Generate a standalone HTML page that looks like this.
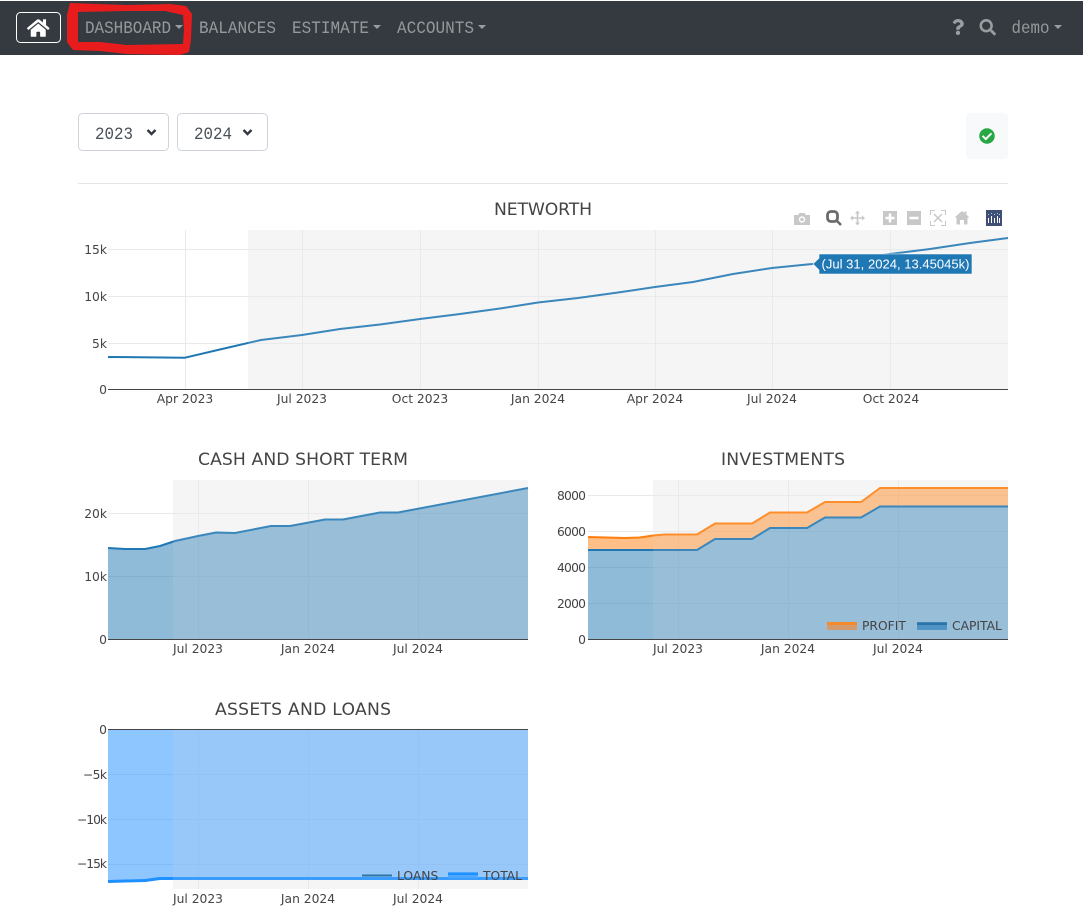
<!DOCTYPE html>
<html lang="en">
<head>
<meta charset="utf-8">
<title>Dashboard</title>
<style>
html,body{margin:0;padding:0;background:#fff;width:1083px;height:907px;overflow:hidden}
svg{display:block;position:absolute;left:0;top:0}
.nav{font-family:"Liberation Mono",monospace;font-size:17.5px;fill:#96999c}
.sel{font-family:"Liberation Mono",monospace;font-size:17.5px;fill:#495057}
.t{font-family:"DejaVu Sans",sans-serif;font-size:12.3px;fill:#444}
.e{text-anchor:end}
.m{text-anchor:middle}
.title{font-family:"DejaVu Sans",sans-serif;font-size:17.2px;fill:#444;text-anchor:middle}
.g{stroke:#e9e9e9;stroke-width:1;fill:none}
.l{fill:none;stroke-width:2;stroke-linejoin:round}
</style>
</head>
<body>
<svg width="1083" height="907" viewBox="0 0 1083 907" xmlns="http://www.w3.org/2000/svg">
<!-- Navbar -->
<rect x="0" y="1" width="1083" height="54" fill="#343a40"/>
<rect x="16.5" y="12.5" width="44" height="30" rx="4" fill="none" stroke="#fff"/>
<svg x="27" y="18" width="22.5" height="20" viewBox="0 0 576 512"><path fill="#fff" d="M280.37 148.26L96 300.11V464a16 16 0 0 0 16 16l112.06-.29a16 16 0 0 0 15.92-16V368a16 16 0 0 1 16-16h64a16 16 0 0 1 16 16v95.64a16 16 0 0 0 16 16.05L464 480a16 16 0 0 0 16-16V300L295.67 148.26a12.19 12.19 0 0 0-15.3 0zM571.6 251.47L488 182.56V44.05a12 12 0 0 0-12-12h-56a12 12 0 0 0-12 12v72.61L318.47 43a48 48 0 0 0-61 0L4.34 251.47a12 12 0 0 0-1.6 16.9l25.5 31A12 12 0 0 0 45.15 301l235.22-193.74a12.19 12.19 0 0 1 15.3 0L530.9 301a12 12 0 0 0 16.9-1.6l25.5-31a12 12 0 0 0-1.7-16.93z"/></svg>
<text class="nav" x="85" y="33" textLength="86" lengthAdjust="spacingAndGlyphs">DASHBOARD</text>
<path d="M175 25h8l-4 4z" fill="#9a9da0"/>
<text class="nav" x="199" y="33" textLength="77" lengthAdjust="spacingAndGlyphs">BALANCES</text>
<text class="nav" x="292" y="33" textLength="77" lengthAdjust="spacingAndGlyphs">ESTIMATE</text>
<path d="M373 25h8l-4 4z" fill="#9a9da0"/>
<text class="nav" x="397" y="33" textLength="77" lengthAdjust="spacingAndGlyphs">ACCOUNTS</text>
<path d="M478 25h8l-4 4z" fill="#9a9da0"/>
<svg x="952" y="19" width="12" height="16" viewBox="0 0 384 512"><path fill="#9a9da0" d="M202.021 0C122.202 0 70.503 32.703 29.914 91.026c-7.363 10.58-5.093 25.086 5.178 32.874l43.138 32.709c10.373 7.865 25.132 6.026 33.253-4.148 25.049-31.381 43.63-49.449 82.757-49.449 30.764 0 68.816 19.799 68.816 49.631 0 22.552-18.617 34.134-48.993 51.164-35.423 19.86-82.299 44.576-82.299 106.405V320c0 13.255 10.745 24 24 24h72.471c13.255 0 24-10.745 24-24v-5.773c0-42.86 125.268-44.645 125.268-160.627C377.504 66.256 286.902 0 202.021 0zM192 373.459c-38.196 0-69.271 31.075-69.271 69.271 0 38.195 31.075 69.27 69.271 69.27s69.271-31.075 69.271-69.271-31.075-69.27-69.271-69.27z"/></svg>
<svg x="979.5" y="19" width="16.5" height="16.5" viewBox="0 0 512 512"><path fill="#9a9da0" d="M505 442.7L405.3 343c-4.5-4.5-10.6-7-17-7H372c27.6-35.3 44-79.7 44-128C416 93.1 322.9 0 208 0S0 93.1 0 208s93.1 208 208 208c48.3 0 92.7-16.4 128-44v16.3c0 6.4 2.5 12.5 7 17l99.7 99.7c9.4 9.4 24.6 9.4 33.9 0l28.3-28.3c9.4-9.4 9.4-24.6.1-34zM208 336c-70.7 0-128-57.2-128-128 0-70.7 57.2-128 128-128 70.7 0 128 57.2 128 128 0 70.7-57.2 128-128 128z"/></svg>
<text class="nav" x="1011.500" y="33" textLength="38" lengthAdjust="spacingAndGlyphs">demo</text>
<path d="M1054 25h8l-4 4z" fill="#9a9da0"/>

<!-- Red scribble -->
<path fill-rule="evenodd" fill="#e81c1c" d="M70 3L127 5L170 4L186 6L192 14L191 40L189 52L180 55L127 54L100 51L73 50L67 42L67 15ZM78 12L127 11L165 11L183 15L184 30L183 44L127 45L100 42L78 42Z"/>

<!-- Year selects -->
<rect x="78.500" y="113.500" width="90" height="37" rx="4" fill="#fff" stroke="#ced4da"/>
<text class="sel" x="95" y="139" textLength="38" lengthAdjust="spacingAndGlyphs">2023</text>
<path d="M147.500 130l4 4 4-4" fill="none" stroke="#343a40" stroke-width="2.400"/>
<rect x="177.500" y="113.500" width="90" height="37" rx="4" fill="#fff" stroke="#ced4da"/>
<text class="sel" x="194" y="139" textLength="38" lengthAdjust="spacingAndGlyphs">2024</text>
<path d="M243.500 130l4 4 4-4" fill="none" stroke="#343a40" stroke-width="2.400"/>

<!-- Status -->
<rect x="966" y="113" width="42" height="46" rx="4" fill="#f8f9fa"/>
<svg x="979" y="128" width="16" height="16" viewBox="0 0 512 512"><path fill="#28a745" d="M504 256c0 136.967-111.033 248-248 248S8 392.967 8 256 119.033 8 256 8s248 111.033 248 248zM227.314 387.314l184-184c6.248-6.248 6.248-16.379 0-22.627l-22.627-22.627c-6.248-6.249-16.379-6.249-22.628 0L216 308.118l-70.059-70.059c-6.248-6.248-16.379-6.248-22.628 0l-22.627 22.627c-6.248 6.248-6.248 16.379 0 22.627l104 104c6.249 6.25 16.379 6.25 22.628.001z"/></svg>
<rect x="78" y="183" width="930" height="1" fill="#e5e5e5"/>

<!-- NETWORTH -->
<text class="title" x="543" y="215" textLength="98">NETWORTH</text>
<rect x="248" y="230" width="760" height="159" fill="#f5f5f5"/>
<path class="g" d="M108 249.500H1008M108 296.500H1008M108 343.500H1008M185.500 230V389M302.500 230V389M420.500 230V389M538.500 230V389M655.500 230V389M772.500 230V389M890.500 230V389"/>
<polyline class="l" stroke="#1f77b4" points="108,357 185,357.700 222,349 261,340 302,335 340,329 380,324.500 420,319 460,314 500,308.500 538,302.500 578,298 618,292.500 655,287 693,282 733,274 772,268 812,264 850,259 890,254 930,249 970,243 1008,238"/>
<rect x="248" y="230" width="760" height="159" fill="#f5f5f5" opacity=".13"/>
<rect x="108" y="389" width="900" height="1" fill="#444"/>
<text class="t e" x="107" y="254">15k</text>
<text class="t e" x="107" y="301">10k</text>
<text class="t e" x="107" y="348">5k</text>
<text class="t e" x="107" y="394">0</text>
<text class="t m" x="185" y="403">Apr 2023</text>
<text class="t m" x="302" y="403">Jul 2023</text>
<text class="t m" x="420" y="403">Oct 2023</text>
<text class="t m" x="538" y="403">Jan 2024</text>
<text class="t m" x="655" y="403">Apr 2024</text>
<text class="t m" x="772" y="403">Jul 2024</text>
<text class="t m" x="891" y="403">Oct 2024</text>
<!-- Tooltip -->
<path d="M813 264L819 258V254H972V274H819V270Z" fill="#1f77b4" stroke="#fff" stroke-width=".6"/>
<text x="821.500" y="268.500" font-family="'Liberation Sans',sans-serif" font-size="13" fill="#fff" textLength="148">(Jul 31, 2024, 13.45045k)</text>
<!-- Modebar -->
<g fill="#c8c8c8">
<path d="M794 215h4l1.500-2h5l1.500 2h4v10h-16z"/>
<circle cx="802" cy="219.500" r="3.200" fill="#fff"/>
<circle cx="802" cy="219.500" r="1.800"/>
<path d="M857.500 210.500l2.500 3h-1.700v3.700h3.700v-1.700l3 2.500-3 2.500v-1.700h-3.700v3.700h1.700l-2.500 3-2.500-3h1.700v-3.700h-3.700v1.700l-3-2.500 3-2.500v1.700h3.700v-3.700h-1.700z"/>
<rect x="883" y="211" width="14" height="14"/>
<rect x="907" y="211" width="14" height="14"/>
<path d="M962 211l2.500 2v-1.500h2v3.200l3 2.800h-2v7h-3.500v-4.500h-4v4.500h-3.500v-7h-2z"/>
</g>
<path d="M890 213.500v9M885.500 218h9M909.500 218h9" stroke="#fff" stroke-width="2.500" fill="none"/>
<path d="M930.500 215v-4.500h4.500M941 210.500h4.500v4.500M945.500 221v4.500h-4.500M935 225.500h-4.500v-4.500" fill="none" stroke="#c8c8c8"/>
<path d="M934 214l8 8M942 214l-8 8" stroke="#c8c8c8" stroke-width="1.500"/>
<rect x="827.500" y="211.500" width="10" height="10" rx="3.500" fill="#fff" stroke="#6b6b6b" stroke-width="2.800"/>
<path d="M836.500 220.500l4.500 4.500" stroke="#6b6b6b" stroke-width="2.600"/>
<rect x="986" y="210" width="16" height="16" fill="#3f4f75"/>
<path d="M988.500 218v5M991.500 216v7M994.500 218v5M997.500 216v7M999.500 218v5" stroke="#fff" stroke-width="1"/>
<path d="M988.500 214v1M991.500 213v1M994.500 214v1M997.500 213v1M999.500 214v1" stroke="#9fd8d6" stroke-width="1"/>

<!-- CASH AND SHORT TERM -->
<text class="title" x="303" y="465" textLength="210">CASH AND SHORT TERM</text>
<rect x="173" y="480" width="355" height="159" fill="#f5f5f5"/>
<path class="g" d="M108 513.500H528M108 576.500H528M198.500 480V639M308.500 480V639M418.500 480V639"/>
<polygon fill="#1f77b4" fill-opacity=".5" points="108,548 125,549 145,549 160,546 175,541 198,536 216,532.500 235,533 271,526 290,526 325,519.500 343,519.500 380,512.500 398,512.500 528,488 528,639 108,639"/>
<polyline class="l" stroke="#1f77b4" points="108,548 125,549 145,549 160,546 175,541 198,536 216,532.500 235,533 271,526 290,526 325,519.500 343,519.500 380,512.500 398,512.500 528,488"/>
<rect x="173" y="480" width="355" height="159" fill="#f5f5f5" opacity=".13"/>
<rect x="108" y="639" width="420" height="1" fill="#444"/>
<text class="t e" x="107" y="518">20k</text>
<text class="t e" x="107" y="581">10k</text>
<text class="t e" x="107" y="644">0</text>
<text class="t m" x="198" y="653">Jul 2023</text>
<text class="t m" x="308" y="653">Jan 2024</text>
<text class="t m" x="418" y="653">Jul 2024</text>

<!-- INVESTMENTS -->
<text class="title" x="783" y="465" textLength="124">INVESTMENTS</text>
<rect x="653" y="480" width="355" height="159" fill="#f5f5f5"/>
<path class="g" d="M588 495.500H1008M588 531.500H1008M588 567.500H1008M588 603.500H1008M678.500 480V639M788.500 480V639M898.500 480V639"/>
<polygon fill="#1f77b4" fill-opacity=".5" points="588,550 697,550 715,539 752,539 770,528 807,528 825,517.500 861,517.500 880,506.500 1008,506.500 1008,639 588,639"/>
<polygon fill="#ff7f0e" fill-opacity=".5" points="588,537 625,538 640,537.500 653,535.500 665,534.500 697,534.500 715,523.500 752,523.500 770,512.500 807,512.500 825,502 861,502 880,488 1008,488 1008,506.500 880,506.500 861,517.500 825,517.500 807,528 770,528 752,539 715,539 697,550 588,550"/>
<polyline class="l" stroke="#1f77b4" points="588,550 697,550 715,539 752,539 770,528 807,528 825,517.500 861,517.500 880,506.500 1008,506.500"/>
<polyline class="l" stroke="#ff7f0e" points="588,537 625,538 640,537.500 653,535.500 665,534.500 697,534.500 715,523.500 752,523.500 770,512.500 807,512.500 825,502 861,502 880,488 1008,488"/>
<rect x="653" y="480" width="355" height="159" fill="#f5f5f5" opacity=".13"/>
<rect x="588" y="639" width="420" height="1" fill="#444"/>
<text class="t e" x="586" y="500" textLength="29">8000</text>
<text class="t e" x="586" y="536" textLength="29">6000</text>
<text class="t e" x="586" y="572" textLength="29">4000</text>
<text class="t e" x="586" y="608" textLength="29">2000</text>
<text class="t e" x="586" y="644">0</text>
<text class="t m" x="678" y="653">Jul 2023</text>
<text class="t m" x="788" y="653">Jan 2024</text>
<text class="t m" x="898" y="653">Jul 2024</text>
<rect x="827" y="622" width="30" height="8" fill="#d49a6c"/>
<rect x="827" y="622" width="30" height="3" fill="#f58a2c"/>
<text class="t" x="862" y="630">PROFIT</text>
<rect x="917" y="622" width="30" height="8" fill="#4f94c4"/>
<rect x="917" y="622.500" width="30" height="2.500" fill="#2a74a8"/>
<text class="t" x="952" y="630">CAPITAL</text>

<!-- ASSETS AND LOANS -->
<text class="title" x="303" y="715" textLength="176">ASSETS AND LOANS</text>
<rect x="173" y="730" width="355" height="159" fill="#f5f5f5"/>
<path class="g" d="M108 774.500H528M108 819.500H528M108 864.500H528M198.500 730V889M308.500 730V889M418.500 730V889"/>
<polygon fill="#1e90ff" fill-opacity=".5" points="108,730 528,730 528,878.500 160,878.500 145,880.500 125,881 108,881.500"/>
<polyline class="l" stroke="#1e90ff" style="stroke-width:3" points="108,881.500 125,881 145,880.500 160,878.500 528,878.500"/>
<rect x="173" y="730" width="355" height="159" fill="#f5f5f5" opacity=".13"/>
<rect x="108" y="729" width="420" height="1" fill="#444"/>
<text class="t e" x="107" y="734">0</text>
<text class="t e" x="107" y="779" textLength="24">−5k</text>
<text class="t e" x="107" y="824" textLength="30">−10k</text>
<text class="t e" x="107" y="868" textLength="30">−15k</text>
<text class="t m" x="198" y="903">Jul 2023</text>
<text class="t m" x="308" y="903">Jan 2024</text>
<text class="t m" x="418" y="903">Jul 2024</text>
<rect x="362" y="874.500" width="30" height="2" fill="#2a74a8"/>
<text class="t" x="397" y="880">LOANS</text>
<rect x="448" y="872" width="30" height="6" fill="#4da6ff"/>
<rect x="448" y="873" width="30" height="2" fill="#1e90ff"/>
<text class="t" x="483" y="880">TOTAL</text>
</svg>
</body>
</html>
